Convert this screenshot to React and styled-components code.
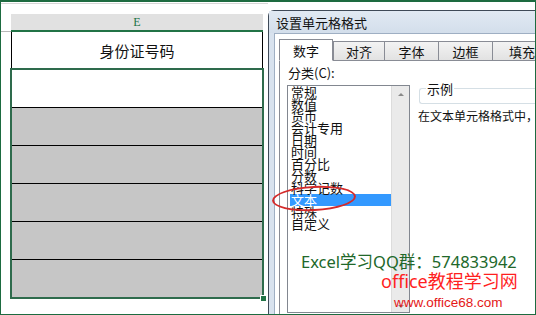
import React from "react";
import styled, { createGlobalStyle } from "styled-components";

const GlobalStyle = createGlobalStyle`
  html, body {
    margin: 0;
    padding: 0;
    background: #fff;
  }
  body {
    font-family: "Liberation Sans", "Noto Sans CJK SC", sans-serif;
  }
`;

const Frame = styled.div`
  position: relative;
  width: 536px;
  height: 315px;
  box-sizing: border-box;
  border: 1px solid #1d6b40;
  border-top-width: 2px;
  display: flex;
  background: #fff;
  overflow: hidden;
`;

/* ---------- spreadsheet side ---------- */

const Sheet = styled.div`
  width: 267px;
  flex: none;
  display: flex;
  flex-direction: column;
  padding-top: 1px;
`;

const TopRule = styled.div`
  height: 0;
  border-bottom: 1px solid #d6d6d6;
  margin-bottom: 10px;
`;

const Row = styled.div`
  display: flex;
`;

const Gutter = styled.div`
  width: 10px;
  flex: none;
  box-sizing: border-box;
  border-bottom: ${(p) => (p.$rule ? "1px solid #b8b8b8" : "none")};
`;

const ColHeader = styled.div`
  width: 252px;
  height: 16px;
  background: #e1e1e1;
  border-bottom: 2px solid #217346;
  color: #217346;
  font-family: "Liberation Serif", serif;
  font-size: 12px;
  line-height: 17px;
  text-align: center;
`;

const Column = styled.div`
  width: 253px;
  display: flex;
  flex-direction: column;
`;

const TitleCell = styled.div`
  height: 36px;
  width: 252px;
  box-sizing: border-box;
  border-left: 1px solid #000;
  border-right: 1px solid #000;
  display: flex;
  align-items: center;
  justify-content: center;
  font-family: "Noto Sans CJK SC", sans-serif;
  font-size: 15px;
  color: #111;
`;

const Selection = styled.div`
  position: relative;
  margin-left: -1px;
  width: 254px;
  box-sizing: border-box;
  border: 2px solid #2e6b4c;
  display: flex;
  flex-direction: column;
`;

const Cell = styled.div`
  height: 37px;
  background: ${(p) => (p.$shaded ? "#c6c6c6" : "#fff")};
  border-top: ${(p) => (p.$shaded ? "1px solid #000" : "none")};
`;

const FillHandle = styled.div`
  position: absolute;
  right: -5px;
  bottom: -5px;
  width: 5px;
  height: 5px;
  background: #217346;
  border: 1px solid #fff;
`;

/* ---------- dialog side ---------- */

const Dialog = styled.div`
  flex: 1;
  margin-top: 8px;
  display: flex;
  flex-direction: column;
  border-left: 1px solid #3f4a58;
  border-top: 1px solid #3f4a58;
  border-top-left-radius: 6px;
  background: #d8e2ee;
`;

const TitleBar = styled.div`
  height: 22px;
  padding-left: 7px;
  display: flex;
  align-items: center;
  font-family: "Noto Sans CJK SC", sans-serif;
  font-size: 13px;
  color: #111;
  background: linear-gradient(#e1e9f3, #d3deeb);
`;

const Client = styled.div`
  flex: 1;
  margin-left: 5px;
  border-left: 1px solid #9fafc3;
  border-top: 1px solid #9fafc3;
  background: #fff;
  padding: 4px 0 0 4px;
  display: flex;
  flex-direction: column;
`;

const Tabs = styled.div`
  display: flex;
  align-items: flex-end;
  height: 22px;
  position: relative;
  z-index: 1;
`;

const Tab = styled.div`
  width: ${(p) => p.$w}px;
  height: ${(p) => (p.$active ? 22 : 19)}px;
  box-sizing: border-box;
  flex: none;
  border: 1px solid #898c95;
  border-bottom: ${(p) => (p.$active ? "1px solid #fff" : "none")};
  margin-bottom: ${(p) => (p.$active ? "-1px" : "0")};
  margin-right: ${(p) => (p.$active ? "0" : "-1px")};
  background: ${(p) =>
    p.$active ? "#fff" : "linear-gradient(#f3f3f3, #e2e2e2)"};
  display: flex;
  align-items: center;
  justify-content: center;
  font-family: "Noto Sans CJK SC", sans-serif;
  font-size: 13px;
  color: #111;
`;

const Panel = styled.div`
  flex: 1;
  border-top: 1px solid #898c95;
  border-left: 1px solid #898c95;
  padding: 5px 0 0 7px;
  display: grid;
  grid-template-columns: 123px 1fr;
  grid-template-rows: 19px 1fr;
  column-gap: 9px;
  font-family: "Noto Sans CJK SC", sans-serif;
  font-size: 13px;
  color: #111;
`;

const Label = styled.div`
  grid-column: 1 / 3;
  line-height: 14px;
  padding-left: 1px;
`;

const ListBox = styled.div`
  height: 228px;
  box-sizing: border-box;
  border: 1px solid #828790;
  display: flex;
`;

const Items = styled.div`
  flex: 1;
  padding-left: 2px;
`;

const Item = styled.div`
  height: 12px;
  line-height: 12px;
  padding-left: 1px;
  white-space: nowrap;
  background: ${(p) => (p.$selected ? "#3399ff" : "transparent")};
  color: ${(p) => (p.$selected ? "#fff" : "#111")};
`;

const Scroll = styled.div`
  width: 17px;
  flex: none;
  background: #eaeaea;
  border-left: 1px solid #dcdcdc;
  display: flex;
  flex-direction: column;
  justify-content: space-between;
  align-items: center;
  padding: 7px 0 4px;
`;

const Arrow = styled.div`
  width: 0;
  height: 0;
  border-left: 3px solid transparent;
  border-right: 3px solid transparent;
  border-${(p) => (p.$down ? "top" : "bottom")}: 3px solid #8a8a8a;
`;

const RightCol = styled.div`
  display: flex;
  flex-direction: column;
  min-width: 0;
`;

const Group = styled.fieldset`
  margin: -3px 0 0 0;
  padding: 0 6px;
  height: 20px;
  border: 1px solid #d5dfe5;
  border-right: none;
  border-radius: 3px 0 0 3px;
`;

const Legend = styled.legend`
  padding: 0 1px;
  font-size: 13px;
  line-height: 13px;
`;

const Note = styled.div`
  margin-top: 5px;
  margin-left: -1px;
  white-space: nowrap;
  font-size: 12px;
  line-height: 14px;
`;

/* ---------- annotations over the picture ---------- */

const Circle = styled.div`
  position: absolute;
  left: 271px;
  top: 184px;
  width: 80px;
  height: 21px;
  border: 2px solid #d42a2a;
  border-radius: 50%;
  transform: rotate(-3deg);
`;

const QQLine = styled.div`
  position: absolute;
  left: 300px;
  top: 250px;
  font-family: "Noto Sans", "Noto Sans CJK SC", sans-serif;
  font-size: 16.5px;
  line-height: 20px;
  color: #21682a;
  white-space: nowrap;
`;

const SiteName = styled.div`
  position: absolute;
  left: 380px;
  top: 268px;
  font-family: "Noto Sans", "Noto Sans CJK SC", sans-serif;
  font-size: 18px;
  line-height: 22px;
  color: #ff1f1f;
  white-space: nowrap;
`;

const SiteUrl = styled.div`
  position: absolute;
  left: 393px;
  top: 293px;
  font-family: "Liberation Sans", sans-serif;
  font-size: 13.5px;
  line-height: 15px;
  color: #e41818;
  white-space: nowrap;
`;

const categories = [
  "常规",
  "数值",
  "货币",
  "会计专用",
  "日期",
  "时间",
  "百分比",
  "分数",
  "科学记数",
  "文本",
  "特殊",
  "自定义",
];

const tabs = [
  { name: "数字", w: 54 },
  { name: "对齐", w: 52 },
  { name: "字体", w: 55 },
  { name: "边框", w: 55 },
  { name: "填充", w: 60 },
];

export default function App() {
  return (
    <>
      <GlobalStyle />
      <Frame>
        <Sheet>
          <TopRule />
          <Row>
            <Gutter $rule />
            <ColHeader>E</ColHeader>
          </Row>
          <Row>
            <Gutter />
            <Column>
              <TitleCell>身份证号码</TitleCell>
              <Selection>
                <Cell />
                {[0, 1, 2, 3, 4].map((i) => (
                  <Cell key={i} $shaded />
                ))}
                <FillHandle />
              </Selection>
            </Column>
          </Row>
        </Sheet>

        <Dialog>
          <TitleBar>设置单元格格式</TitleBar>
          <Client>
            <Tabs>
              {tabs.map((t, i) => (
                <Tab key={t.name} $w={t.w} $active={i === 0}>
                  {t.name}
                </Tab>
              ))}
            </Tabs>
            <Panel>
              <Label>分类(C):</Label>
              <ListBox>
                <Items>
                  {categories.map((c) => (
                    <Item key={c} $selected={c === "文本"}>
                      {c}
                    </Item>
                  ))}
                </Items>
                <Scroll>
                  <Arrow />
                  <Arrow $down />
                </Scroll>
              </ListBox>
              <RightCol>
                <Group>
                  <Legend>示例</Legend>
                </Group>
                <Note>在文本单元格格式中，</Note>
              </RightCol>
            </Panel>
          </Client>
        </Dialog>

        <Circle />
        <QQLine>Excel学习QQ群：574833942</QQLine>
        <SiteName>office教程学习网</SiteName>
        <SiteUrl>www.office68.com</SiteUrl>
      </Frame>
    </>
  );
}
